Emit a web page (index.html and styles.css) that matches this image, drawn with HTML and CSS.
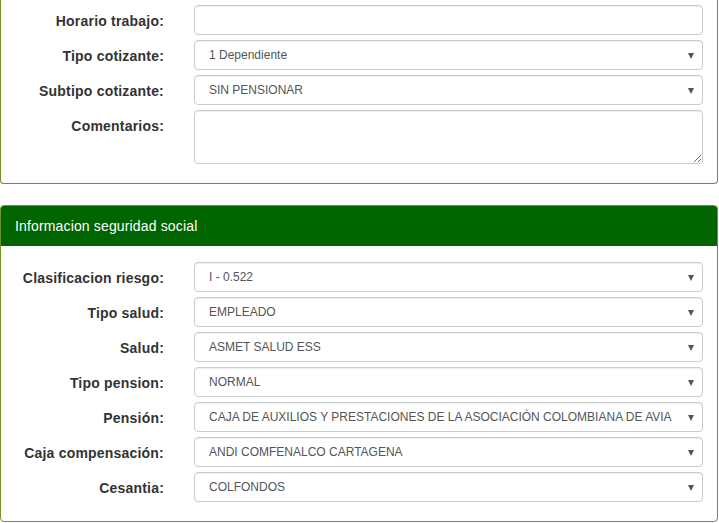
FILE: index.html
```html
<!DOCTYPE html>
<html lang="es">
<head>
<meta charset="utf-8">
<title>Formulario</title>
<link rel="stylesheet" href="styles.css">
</head>
<body>
<div class="page">
  <section class="panel panel-top">
    <div class="panel-body panel-body-top">
      <div class="form">
        <label class="label">Horario trabajo:</label>
        <div class="input"></div>

        <label class="label">Tipo cotizante:</label>
        <div class="select">1 Dependiente</div>

        <label class="label">Subtipo cotizante:</label>
        <div class="select">SIN PENSIONAR</div>

        <label class="label">Comentarios:</label>
        <textarea class="textarea"></textarea>
      </div>
    </div>
  </section>

  <section class="panel panel-second">
    <div class="panel-heading">Informacion seguridad social</div>
    <div class="panel-body">
      <div class="form">
        <label class="label">Clasificacion riesgo:</label>
        <div class="select">I - 0.522</div>

        <label class="label">Tipo salud:</label>
        <div class="select">EMPLEADO</div>

        <label class="label">Salud:</label>
        <div class="select">ASMET SALUD ESS</div>

        <label class="label">Tipo pension:</label>
        <div class="select">NORMAL</div>

        <label class="label">Pensión:</label>
        <div class="select">CAJA DE AUXILIOS Y PRESTACIONES DE LA ASOCIACIÓN COLOMBIANA DE AVIA</div>

        <label class="label">Caja compensación:</label>
        <div class="select">ANDI COMFENALCO CARTAGENA</div>

        <label class="label">Cesantia:</label>
        <div class="select">COLFONDOS</div>
      </div>
    </div>
  </section>
</div>
</body>
</html>
```

FILE: styles.css
```css
* {
  box-sizing: border-box;
}

html, body {
  margin: 0;
  padding: 0;
  background: #ffffff;
}

body {
  font-family: "Liberation Sans", Arial, sans-serif;
  color: #333333;
  font-size: 14px;
}

.page {
  width: 718px;
}

.panel {
  width: 718px;
  background: #ffffff;
  border: 1px solid #6f9223;
  border-radius: 4px;
}

.panel-top {
  border-top: none;
  border-radius: 0 0 4px 4px;
}

.panel-second {
  margin-top: 21px;
  overflow: hidden;
}

.panel-heading {
  background: #006400;
  color: #ffffff;
  height: 40px;
  line-height: 40px;
  padding: 0 14px;
  font-size: 14px;
  letter-spacing: 0.15px;
}

.panel-body {
  padding: 16px 14px 19px 0;
}

.panel-body-top {
  padding-top: 5px;
}

.form {
  display: grid;
  grid-template-columns: 163px 509px;
  column-gap: 30px;
  row-gap: 5px;
  align-items: start;
}

.label {
  display: block;
  height: 30px;
  text-align: right;
  font-weight: bold;
  font-size: 14px;
  line-height: 32px;
  letter-spacing: 0.2px;
  color: #333333;
  white-space: nowrap;
}

.input,
.select,
.textarea {
  height: 30px;
  border: 1px solid #cccccc;
  border-radius: 4px;
  background: #ffffff;
  box-shadow: inset 0 1px 1px rgba(0, 0, 0, 0.075);
}

.select {
  position: relative;
  padding: 0 30px 0 14px;
  font-size: 12px;
  line-height: 28px;
  color: #555555;
  white-space: nowrap;
  overflow: hidden;
}

.select::after {
  content: "";
  position: absolute;
  right: 8px;
  top: 12px;
  width: 0;
  height: 0;
  border-left: 3px solid transparent;
  border-right: 3px solid transparent;
  border-top: 6px solid #555555;
}

.textarea {
  display: block;
  height: 54px;
  width: 509px;
  margin: 0;
  padding: 6px 12px;
  font-family: inherit;
  font-size: 12px;
  resize: vertical;
}
```
